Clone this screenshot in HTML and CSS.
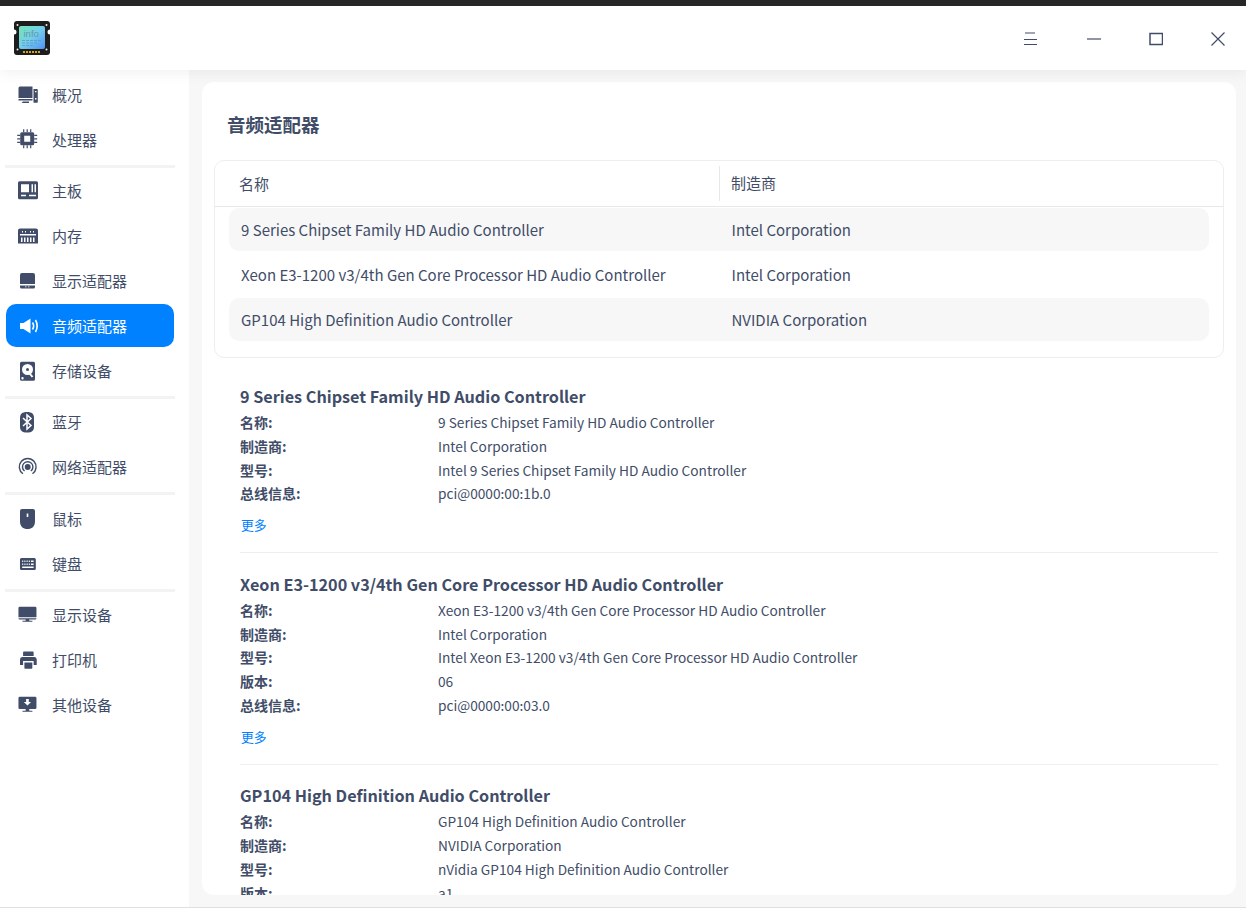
FILE: index.html
```html
<!DOCTYPE html>
<html lang="zh-CN">
<head>
<meta charset="utf-8">
<title>设备管理器</title>
<link rel="stylesheet" href="styles.css">
</head>
<body>
<div class="topstrip"></div>
<div class="window">
  <header class="titlebar">
    <svg class="logo" width="38" height="36" viewBox="0 0 38 36">
      <defs><linearGradient id="lg" x1="0" y1="0" x2="1" y2="1"><stop offset="0" stop-color="#74e6b4"/><stop offset=".5" stop-color="#74cdec"/><stop offset="1" stop-color="#5090f8"/></linearGradient></defs>
      <path d="M4 1h30a3 3 0 0 1 3 3v5.500a2.500 2.500 0 0 0 0 5V32a3 3 0 0 1-3 3H4a3 3 0 0 1-3-3V14.500a2.500 2.500 0 0 0 0-5V4a3 3 0 0 1 3-3z" fill="#1d1d1d"/>
      <rect x="6" y="6" width="26" height="23" rx="2" fill="url(#lg)"/>
      <circle cx="4.500" cy="29.500" r="1" fill="#eee"/><circle cx="33.500" cy="29.500" r="1" fill="#eee"/><circle cx="4.500" cy="5" r="1" fill="#eee"/><circle cx="33.500" cy="5" r="1" fill="#eee"/>
      <text x="10.500" y="17" class="logotext">info</text>
      <path d="M9 20.500h20M9 23h16M9 25.500h12" stroke="#5a9bc0" stroke-width=".8" stroke-dasharray="3 1" fill="none"/>
      <path d="M10 32h18" stroke="#d8a514" stroke-width="2" stroke-dasharray="2 1"/>
    </svg>
    <div class="winbtns">
      <svg class="winbtn" width="14" height="14" viewBox="0 0 14 14"><path d="M1 1h10M0 7.500h13M0 12.500h13" class="ln"/></svg>
      <svg class="winbtn" width="14" height="14" viewBox="0 0 14 14"><path d="M0 7h14" class="ln"/></svg>
      <svg class="winbtn" width="14" height="14" viewBox="-0.500 0 14 14"><rect x=".5" y="1.500" width="12.500" height="11" class="ln box"/></svg>
      <svg class="winbtn" width="14" height="14" viewBox="0 0 14 14"><path d="M.5.5l13 13M13.500.5l-13 13" class="ln"/></svg>
    </div>
  </header>
  <div class="main">
    <nav class="sidebar">
      <a class="item"><svg class="ic" viewBox="0 0 24 24"><path d="M2.500 5a1.500 1.500 0 0 1 1.500-1.500h12.500V15H2.500zM2.500 16h14v1.500h-14zM7 18.500h6V20H5.500z"/><path d="M17.500 6h3.500a.8.8 0 0 1 .8.800V19a.8.8 0 0 1-.8.800h-3.500zM19 8v1.200h1.500V8zM19 15v1.500h1.500V15z" fill-rule="evenodd"/></svg><span>概况</span></a>
      <a class="item"><svg class="ic" viewBox="0 0 24 24"><g transform="translate(-.8 -1.200)"><path d="M6.500 5.500h11a1.500 1.500 0 0 1 1.500 1.500v10a1.500 1.500 0 0 1-1.500 1.500h-11A1.500 1.500 0 0 1 5 17V7a1.500 1.500 0 0 1 1.500-1.500zM9 9v6h6V9z" fill-rule="evenodd"/><path d="M8.500 2.500v3M12 2.500v3M15.500 2.500v3M8.500 18.500v3M12 18.500v3M15.500 18.500v3M2 8.500h3M2 12h3M2 15.500h3M19 8.500h3M19 12h3M19 15.500h3" class="st thin"/></g></svg><span>处理器</span></a>
      <div class="sep tight"></div>
      <a class="item"><svg class="ic" viewBox="0 0 24 24"><path transform="translate(0 -.7)" d="M3.500 3h17A1.500 1.500 0 0 1 22 4.500v15a1.500 1.500 0 0 1-1.500 1.500h-17A1.500 1.500 0 0 1 2 19.500v-15A1.500 1.500 0 0 1 3.500 3zM5 6v8h8V6zM15.500 6v8h1.500V6zM18.500 6v8H20V6zM5 16.500V18h5v-1.500zM13 16.500V18h7v-1.500z" fill-rule="evenodd"/></svg><span>主板</span></a>
      <a class="item"><svg class="ic" viewBox="0 0 24 24"><path d="M4 4.500h16A2 2 0 0 1 22 6.500v13H2v-13a2 2 0 0 1 2-2zM4 10v1.500h16V10zM6 7v1.500h1V7zM9 7v1.500h1V7zM14 7v1.500h1V7zM17 7v1.500h1V7zM5 13.500V18h1.500v-4.500zM8 13.500V18h1.500v-4.500zM11 13.500V18h1.500v-4.500zM14 13.500V18h1.500v-4.500zM17 13.500V18h1.500v-4.500z" fill-rule="evenodd"/></svg><span>内存</span></a>
      <a class="item"><svg class="ic" viewBox="0 0 24 24"><path d="M6 4h11A2 2 0 0 1 19 6v9H4V6a2 2 0 0 1 2-2zM4 16.500h15V18a1.500 1.500 0 0 1-1.500 1.500h-12A1.500 1.500 0 0 1 4 18zM9 17.500v.8h1.500v-.8zM12 17.500v.8h1.500v-.8z" fill-rule="evenodd"/></svg><span>显示适配器</span></a>
      <a class="item active"><svg class="ic" viewBox="0 0 24 24"><path d="M4 9h3.500L14.500 4.500v15L7.500 15H4z"/><path d="M16.500 8.500c1.300 2 1.300 5 0 7M19.500 6c2.200 4 2.200 8 0 12" class="st"/></svg><span>音频适配器</span></a>
      <a class="item"><svg class="ic" viewBox="0 0 24 24"><path d="M5.500 2.700h12A1.500 1.500 0 0 1 19 4.200v16a1.500 1.500 0 0 1-1.500 1.500h-12A1.500 1.500 0 0 1 4 20.200v-16a1.500 1.500 0 0 1 1.500-1.500zM11.500 5a5.500 5.500 0 1 0 0 11 5.500 5.500 0 0 0 0-11zM6.500 18a1.200 1.200 0 1 0 0 2.400 1.200 1.200 0 0 0 0-2.400z" fill-rule="evenodd"/><circle cx="11.500" cy="10.500" r="1.500"/><path d="M12.500 13l4 5" stroke="#fff" stroke-width="2"/></svg><span>存储设备</span></a>
      <div class="sep tight"></div>
      <a class="item"><svg class="ic" viewBox="0 0 24 24"><path d="M11 2c5 0 7 2 7 6v8.500c0 4-2 6-7 6s-7-2-7-6V8c0-4 2-6 7-6z"/><path d="M7 8l8 7.500-4 3.500V5l4 3.500L7 16" fill="none" stroke="#fff" stroke-width="1.500"/></svg><span>蓝牙</span></a>
      <a class="item"><svg class="ic" viewBox="0 0 24 24"><g transform="translate(.9 1.200) scale(.9)"><path d="M6.700 19.500a9.300 9.300 0 1 1 10.600 0" class="st"/><path d="M8.500 16.500a5.800 5.800 0 1 1 7 0" class="st"/><circle cx="12" cy="12" r="3.300"/></g></svg><span>网络适配器</span></a>
      <div class="sep"></div>
      <a class="item"><svg class="ic" viewBox="0 0 24 24"><path d="M6 2h11a2 2 0 0 1 2 2v10.500c0 5-3.200 7.500-7.500 7.500S4 19.500 4 14.500V4a2 2 0 0 1 2-2zM10.700 6.500v3.500h1.600V6.500z" fill-rule="evenodd"/></svg><span>鼠标</span></a>
      <a class="item"><svg class="ic" viewBox="0 0 24 24"><path transform="translate(.9 0) scale(.88 1)" d="M5 6h15a1.500 1.500 0 0 1 1.500 1.500v9A1.500 1.500 0 0 1 20 18H5a1.500 1.500 0 0 1-1.500-1.500v-9A1.500 1.500 0 0 1 5 6zM6 8.500V10h1.200V8.500zM8.500 8.500V10h1.200V8.500zM11 8.500V10h1.200V8.500zM13.500 8.500V10h1.200V8.500zM16 8.500V10h3V8.500zM6 11.500V13h1.200v-1.500zM8.500 11.500V13h1.200v-1.500zM11 11.500V13h1.200v-1.500zM13.500 11.500V13h1.200v-1.500zM16 11.500V13h3v-1.500zM6 14.500V16h13v-1.500z" fill-rule="evenodd"/></svg><span>键盘</span></a>
      <div class="sep tight"></div>
      <a class="item"><svg class="ic" viewBox="0 0 24 24"><path transform="translate(.2 .2) scale(.9 .88)" d="M4 4h17a1.500 1.500 0 0 1 1.500 1.500V16h-20V5.500A1.500 1.500 0 0 1 4 4zM2.500 17h20c0 1-.7 1.500-1.500 1.500h-6.500V20H18v1H7v-1h3.500v-1.500H4c-.8 0-1.500-.5-1.500-1.500z"/></svg><span>显示设备</span></a>
      <a class="item"><svg class="ic" viewBox="0 0 24 24"><path transform="translate(1.800 0) scale(.88 1)" d="M7 3.500h10a1 1 0 0 1 1 1V8H6V4.500a1 1 0 0 1 1-1zM5 9h14a2.500 2.500 0 0 1 2.500 2.500V17H18v-4H6v4H2.500v-5.500A2.500 2.500 0 0 1 5 9zM7.500 14.500h9V20a.8.8 0 0 1-.8.800H8.300a.8.8 0 0 1-.8-.8z"/></svg><span>打印机</span></a>
      <a class="item"><svg class="ic" viewBox="0 0 24 24"><path transform="translate(.2 .2) scale(.9 .88)" d="M4 4h17a1.500 1.500 0 0 1 1.500 1.500v11A1.500 1.500 0 0 1 21 18h-6.500v2H18v1H7v-1h3.500v-2H4a1.500 1.500 0 0 1-1.500-1.500v-11A1.500 1.500 0 0 1 4 4zM11 6.500V10H8.500l4 4 4-4H14V6.500z" fill-rule="evenodd"/></svg><span>其他设备</span></a>
    </nav>
    <div class="content">
      <section class="card">
        <h1 class="page-title">音频适配器</h1>
        <div class="table">
          <div class="thead"><div class="c1">名称</div><div class="c2">制造商</div></div>
          <div class="trow shade"><div class="c1">9 Series Chipset Family HD Audio Controller</div><div class="c2">Intel Corporation</div></div>
          <div class="trow"><div class="c1">Xeon E3-1200 v3/4th Gen Core Processor HD Audio Controller</div><div class="c2">Intel Corporation</div></div>
          <div class="trow shade"><div class="c1">GP104 High Definition Audio Controller</div><div class="c2">NVIDIA Corporation</div></div>
        </div>
        <div class="details">
          <article class="dev">
            <h2>9 Series Chipset Family HD Audio Controller</h2>
            <dl>
              <dt>名称:</dt><dd>9 Series Chipset Family HD Audio Controller</dd>
              <dt>制造商:</dt><dd>Intel Corporation</dd>
              <dt>型号:</dt><dd>Intel 9 Series Chipset Family HD Audio Controller</dd>
              <dt>总线信息:</dt><dd>pci@0000:00:1b.0</dd>
            </dl>
            <a class="more">更多</a>
          </article>
          <article class="dev">
            <h2>Xeon E3-1200 v3/4th Gen Core Processor HD Audio Controller</h2>
            <dl>
              <dt>名称:</dt><dd>Xeon E3-1200 v3/4th Gen Core Processor HD Audio Controller</dd>
              <dt>制造商:</dt><dd>Intel Corporation</dd>
              <dt>型号:</dt><dd>Intel Xeon E3-1200 v3/4th Gen Core Processor HD Audio Controller</dd>
              <dt>版本:</dt><dd>06</dd>
              <dt>总线信息:</dt><dd>pci@0000:00:03.0</dd>
            </dl>
            <a class="more">更多</a>
          </article>
          <article class="dev">
            <h2>GP104 High Definition Audio Controller</h2>
            <dl>
              <dt>名称:</dt><dd>GP104 High Definition Audio Controller</dd>
              <dt>制造商:</dt><dd>NVIDIA Corporation</dd>
              <dt>型号:</dt><dd>nVidia GP104 High Definition Audio Controller</dd>
              <dt>版本:</dt><dd>a1</dd>
            </dl>
          </article>
        </div>
      </section>
    </div>
  </div>
</div>
</body>
</html>
```
FILE: styles.css
```css
* { box-sizing: border-box; }
html, body { margin: 0; padding: 0; height: 917px; overflow: hidden; background: #fff; }
body { font-family: "Noto Sans CJK SC", "Noto Sans", sans-serif; color: #414d68; font-size: 14px; }
.topstrip { height: 6px; background: #282828; }
.window { height: 902px; display: flex; flex-direction: column; border-bottom: 1px solid #e0e0e0; }
.titlebar { height: 64px; flex: none; display: flex; align-items: center; justify-content: space-between; background: #fff; position: relative; z-index: 2; box-shadow: 0 3px 14px rgba(0,0,0,.06); }
.logo { margin-left: 13px; display: block; }
.logotext { font-family: "Liberation Sans", sans-serif; font-size: 9.5px; fill: #5f9aa8; }
.winbtns { display: flex; align-items: center; gap: 48px; padding: 2px 21px 0 0; }
.winbtn { display: block; }
.winbtn:first-child { margin-right: 1px; margin-left: -1px; }
.ln { fill: none; stroke: #414d68; stroke-width: 1.2; }
.box { stroke-width: 1.5; }
.main { flex: 1; display: flex; min-height: 0; }
.sidebar { width: 189px; flex: none; background: #fff; padding: 2px 15px 0 6px; }
.item { display: flex; align-items: center; gap: 12px; height: 45px; padding-left: 10px; font-size: 15px; color: #414d68; border-radius: 10px; width: 168px; }
.item.active { background: #0081ff; color: #fff; height: 43px; margin: 1px 0; }
.ic { width: 24px; height: 24px; flex: none; fill: #414d68; display: block; }
.st { fill: none; stroke: #414d68; stroke-width: 1.6; }
.thin { stroke-width: 1.2; }
.active .ic { fill: #fff; }
.active .st { stroke: #fff; }
.sep { height: 3px; background: #f3f3f3; margin: 3px 0 1px -1px; width: 170px; }
.sep.tight { margin-bottom: 0; }
.content { flex: 1; min-width: 0; background: #f7f7f7; padding: 12px 10px 12px 13px; }
.card { height: 100%; background: #fff; border-radius: 12px; overflow: hidden; padding: 0 12px; }
.page-title { margin: 0 0 0 13px; font-size: 18.5px; line-height: 27px; font-weight: 700; padding-top: 29px; height: 78px; color: #414d68; }
.table { border: 1px solid #eee; border-radius: 10px; height: 198px; padding: 0 14px; }
.thead { height: 46px; margin: 0 -14px; padding: 0 14px; display: flex; align-items: center; border-bottom: 1px solid #e8e8e8; font-size: 15px; }
.thead .c1 { width: 490px; padding-left: 10px; }
.thead .c2 { height: 35px; line-height: 34px; border-left: 1px solid #e8e8e8; padding-left: 11px; }
.trow { height: 43px; margin-bottom: 2px; padding-bottom: 1px; display: flex; align-items: center; border-radius: 10px; font-size: 15px; }
.thead + .trow { margin-top: 1px; }
.trow.shade { background: #f7f7f7; }
.trow .c1 { width: 502.500px; padding-left: 12px; }
.details { padding: 25px 6px 0 26px; }
.dev { border-bottom: 1px solid #eee; padding-bottom: 13px; margin-bottom: 17.500px; }
.dev:last-child { border-bottom: 0; }
.dev h2 { margin: 0; font-size: 16.2px; line-height: 27px; font-weight: 700; color: #414d68; }
dl { margin: 0; display: grid; grid-template-columns: 198px 1fr; grid-auto-rows: 23.75px; line-height: 23.75px; padding-top: 1.2px; }
dt { font-weight: 700; font-size: 14px; }
dd { margin: 0; font-size: 13.7px; }
.more { display: block; margin-top: 7px; padding: 0 0 2px 1px; font-size: 12.8px; line-height: 24px; height: 26px; color: #0081ff; }
```
